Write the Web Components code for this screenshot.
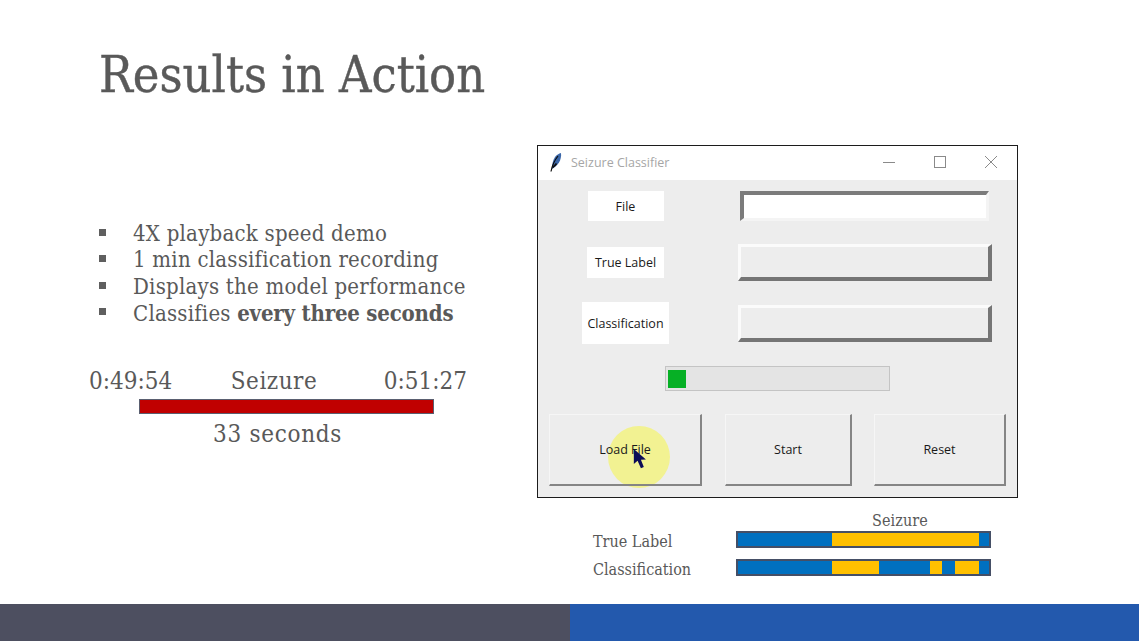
<!DOCTYPE html>
<html>
<head>
<meta charset="utf-8">
<title>Results in Action</title>
<style>
  html, body { margin: 0; padding: 0; background: #fff; }
  bullet-list b { letter-spacing: -.2px; }
</style>
</head>
<body>
<slide-page>
  <slide-heading slot="title">Results in Action</slide-heading>
  <div slot="left">
    <bullet-list>
      <li>4X playback speed demo</li>
      <li>1 min classification recording</li>
      <li>Displays the model performance</li>
      <li>Classifies <b>every three seconds</b></li>
    </bullet-list>
    <seizure-timeline start="0:49:54" label="Seizure" end="0:51:27" caption="33 seconds"></seizure-timeline>
  </div>
  <div slot="right">
    <tk-window title="Seizure Classifier"></tk-window>
    <label-strips></label-strips>
  </div>
</slide-page>

<script>
const SLAB = `"DejaVu Serif Condensed", "DejaVu Serif", serif`;
const UI = `"Open Sans", "Noto Sans", sans-serif`;

class SlidePage extends HTMLElement {
  constructor() {
    super();
    this.attachShadow({ mode: 'open' });
    this.shadowRoot.innerHTML = `
      <style>
        :host { display: flex; flex-direction: column; width: 1139px; height: 641px; overflow: hidden; background: #fff; }
        .head { height: 145px; padding-left: 99px; box-sizing: border-box; }
        .body { flex: 1; display: grid; grid-template-columns: 537px 1fr; }
        .foot { height: 37px; display: grid; grid-template-columns: 570px 1fr; }
        .foot div:first-child { background: #4d4f60; }
        .foot div:last-child { background: #2359ad; }
      </style>
      <div class="head"><slot name="title"></slot></div>
      <div class="body">
        <div><slot name="left"></slot></div>
        <div><slot name="right"></slot></div>
      </div>
      <div class="foot"><div></div><div></div></div>
    `;
  }
}

class SlideHeading extends HTMLElement {
  constructor() {
    super();
    this.attachShadow({ mode: 'open' });
    this.shadowRoot.innerHTML = `
      <style>
        :host { display: block; padding-top: 43px; font: 50px/64px ${SLAB}; color: #595959; -webkit-text-stroke: .4px #595959; }
      </style>
      <slot></slot>
    `;
  }
}

class BulletList extends HTMLElement {
  constructor() {
    super();
    this.attachShadow({ mode: 'open' });
    this.shadowRoot.innerHTML = `
      <style>
        :host { display: block; margin: 75.5px 0 0 99px; font: 22px/26.6px ${SLAB}; letter-spacing: .23px; color: #595959; }
        ul { margin: 0; padding: 0; list-style: none; }
        ::slotted(li) { display: block; position: relative; padding-left: 34px; }
        ::slotted(li)::before {
          content: ""; position: absolute; left: 0; top: 8px;
          width: 7px; height: 7px; background: #5f5f5f;
        }
      </style>
      <ul><slot></slot></ul>
    `;
  }
}

class SeizureTimeline extends HTMLElement {
  constructor() {
    super();
    this.attachShadow({ mode: 'open' });
    this.shadowRoot.innerHTML = `
      <style>
        :host { display: block; margin: 38.5px 0 0 89px; width: 378px; font: 24px/30px ${SLAB}; color: #595959; }
        .labels { display: flex; justify-content: space-between; }
        .name { margin-right: 8px; letter-spacing: .5px; }
        .bar { margin: 3px 0 0 50px; width: 293px; height: 13px; background: #c00000; border: 1px solid #5a5f70; }
        .caption { margin-left: 124px; margin-top: 5px; letter-spacing: .7px; }
      </style>
      <div class="labels">
        <span>${this.getAttribute('start')}</span>
        <span class="name">${this.getAttribute('label')}</span>
        <span>${this.getAttribute('end')}</span>
      </div>
      <div class="bar"></div>
      <div class="caption">${this.getAttribute('caption')}</div>
    `;
  }
}

class TkWindow extends HTMLElement {
  constructor() {
    super();
    this.attachShadow({ mode: 'open' });
    this.shadowRoot.innerHTML = `
      <style>
        :host { display: block; width: 481px; height: 353px; box-sizing: border-box; border: 1px solid #1c1c1c; background: #ededed; font: 13px ${UI}; color: #1a1a1a; position: relative; }
        .titlebar { height: 34px; padding-bottom: 2px; box-sizing: border-box; background: #fff; display: flex; align-items: center; color: #a6a6a6; font-size: 12.5px; }
        .titlebar .feather { margin-left: 11px; width: 14px; height: 20px; }
        .titlebar .name { margin-left: 8px; flex: 1; }
        .titlebar svg.ctl { width: 14px; height: 14px; margin-right: 37px; }
        .titlebar svg.ctl:last-child { margin-right: 19px; }
        .row { display: grid; grid-template-columns: 175px 1fr; align-items: center; }
        .r1 { margin-top: 11px; height: 30px; }
        .r2 { margin-top: 23px; height: 36px; }
        .r3 { margin-top: 22px; height: 42px; }
        tk-progress { margin: 22px 0 0 127px; }
        .buttons { display: flex; margin: 23px 0 0 11px; position: relative; }
        .ring { position: absolute; left: 70px; top: 280px; width: 62px; height: 62px; border-radius: 50%; background: #f2f292; }
        .cursor { position: absolute; left: 95px; top: 302px; width: 15px; height: 22px; }
      </style>
      <div class="ring"></div>
      <div class="titlebar">
        <svg class="feather" viewBox="0 0 14 20">
          <path d="M3 17 C3 12 4 8 6 5 C7.5 3 10 1.5 12 1 C12.5 4 11.5 8 10 10.5 C8.5 13 6 15 3 17 Z" fill="#3a66a8"/>
          <path d="M2 19.5 C3 14 5 9 9 4" stroke="#0b0b0b" stroke-width="1.2" fill="none"/>
          <path d="M3.5 15.5 C5 14.5 6.5 13 7.5 11.5" stroke="#101010" stroke-width="1.8" fill="none"/>
        </svg>
        <span class="name">${this.getAttribute('title')}</span>
        <svg class="ctl" viewBox="0 0 14 14"><path d="M1 7.5H13" stroke="#8a8a8a" fill="none"/></svg>
        <svg class="ctl" viewBox="0 0 14 14"><rect x="1.5" y="1.5" width="11" height="11" stroke="#8a8a8a" fill="none"/></svg>
        <svg class="ctl" viewBox="0 0 14 14"><path d="M1 1L13 13M13 1L1 13" stroke="#8a8a8a" fill="none"/></svg>
      </div>
      <div class="row r1"><tk-label w="76" h="30">File</tk-label><tk-field kind="entry"></tk-field></div>
      <div class="row r2"><tk-label w="77" h="31">True Label</tk-label><tk-field kind="raised"></tk-field></div>
      <div class="row r3"><tk-label w="87" h="42">Classification</tk-label><tk-field kind="raised"></tk-field></div>
      <tk-progress></tk-progress>
      <div class="buttons">
        <tk-button w="153">Load File</tk-button>
        <tk-button w="127" style="margin-left:23px">Start</tk-button>
        <tk-button w="132" style="margin-left:22px">Reset</tk-button>
      </div>
      <svg class="cursor" viewBox="0 0 18 26">
        <path d="M1 1 L1 19 L5.5 15 L9.5 24 L13 22.5 L9.5 14 L15.5 13.5 Z" fill="#0c0c58"/>
      </svg>
    `;
  }
}

class TkLabel extends HTMLElement {
  constructor() {
    super();
    this.attachShadow({ mode: 'open' });
    this.shadowRoot.innerHTML = `
      <style>
        :host { display: flex; align-items: center; justify-content: center; justify-self: center; background: #fff; font-size: 12.5px; width: ${this.getAttribute('w')}px; height: ${this.getAttribute('h')}px; }
      </style>
      <slot></slot>
    `;
  }
}

class TkField extends HTMLElement {
  constructor() {
    super();
    this.attachShadow({ mode: 'open' });
    this.shadowRoot.innerHTML = `
      <style>
        :host { display: block; box-sizing: border-box; border-style: solid; }
        :host([kind="entry"]) { margin-left: 27px; width: 249px; height: 30px; border-width: 4px 3px 3px 4px; border-color: #7b7b7b #f4f4f4 #f4f4f4 #7b7b7b; background: #fff; }
        :host([kind="raised"]) { margin-left: 25px; width: 254px; height: 37px; border-width: 3px 4px 4px 3px; border-color: #fbfbfb #757575 #757575 #fbfbfb; background: #ededed; }
      </style>
    `;
  }
}

class TkProgress extends HTMLElement {
  constructor() {
    super();
    this.attachShadow({ mode: 'open' });
    this.shadowRoot.innerHTML = `
      <style>
        :host { display: block; box-sizing: border-box; width: 225px; height: 25px; background: #e4e4e4; border: 1px solid #c4c4c4; padding: 3px 2px; }
        div { width: 18px; height: 18px; background: #06b025; }
      </style>
      <div></div>
    `;
  }
}

class TkButton extends HTMLElement {
  constructor() {
    super();
    this.attachShadow({ mode: 'open' });
    this.shadowRoot.innerHTML = `
      <style>
        :host { display: flex; align-items: center; justify-content: center; box-sizing: border-box; height: 72px; width: ${this.getAttribute('w')}px; border-style: solid; border-width: 1px 2px 2px 1px; border-color: #f6f6f6 #858585 #858585 #f6f6f6; font-size: 12.5px; }
      </style>
      <slot></slot>
    `;
  }
}

class LabelStrips extends HTMLElement {
  constructor() {
    super();
    this.attachShadow({ mode: 'open' });
    this.shadowRoot.innerHTML = `
      <style>
        :host { display: block; font: 16px/17px ${SLAB}; color: #595959; }
        .top { margin: 13px 0 0 335px; height: 20px; line-height: 20px; letter-spacing: .1px; }
        .row { display: grid; grid-template-columns: 199px 255px; align-items: center; height: 17px; }
        .row + .row { margin-top: 11px; }
        .row span { padding: 4px 0 0 56px; line-height: 13px; white-space: nowrap; }
        .strip { display: flex; height: 17px; box-sizing: border-box; border: 2px solid #454f66; background: #0070c0; }
        i { display: block; height: 100%; }
        .b { background: #0070c0; }
        .y { background: #ffc000; }
      </style>
      <div class="top">Seizure</div>
      <div class="row">
        <span>True Label</span>
        <div class="strip"><i class="b" style="width:94px"></i><i class="y" style="width:147px"></i><i class="b" style="flex:1"></i></div>
      </div>
      <div class="row">
        <span>Classification</span>
        <div class="strip"><i class="b" style="width:94px"></i><i class="y" style="width:47px"></i><i class="b" style="width:51px"></i><i class="y" style="width:12px"></i><i class="b" style="width:13px"></i><i class="y" style="width:24px"></i><i class="b" style="flex:1"></i></div>
      </div>
    `;
  }
}

customElements.define('slide-page', SlidePage);
customElements.define('slide-heading', SlideHeading);
customElements.define('bullet-list', BulletList);
customElements.define('seizure-timeline', SeizureTimeline);
customElements.define('tk-label', TkLabel);
customElements.define('tk-field', TkField);
customElements.define('tk-progress', TkProgress);
customElements.define('tk-button', TkButton);
customElements.define('tk-window', TkWindow);
customElements.define('label-strips', LabelStrips);
</script>
</body>
</html>
